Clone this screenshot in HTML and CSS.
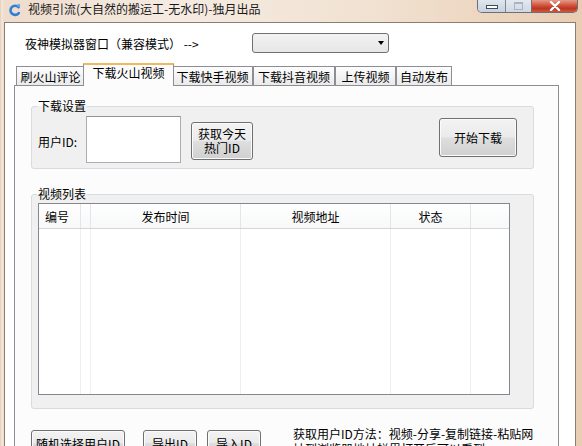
FILE: index.html
```html
<!DOCTYPE html>
<html lang="zh">
<head>
<meta charset="utf-8">
<title>视频引流</title>
<link rel="stylesheet" href="styles.css">
</head>
<body>
<div class="window">
  <div class="titlebar">
    <svg class="app-icon" viewBox="0 0 14 14" width="14" height="14">
      <path d="M10.5 4.2 A4.6 4.6 0 1 0 10.8 10" fill="none" stroke="#2f7fd6" stroke-width="2.6" stroke-linecap="round"/>
      <circle cx="10.6" cy="2.2" r="1.5" fill="#5fa8ee"/>
    </svg>
    <span class="title">视频引流(大自然的搬运工-无水印)-独月出品</span>
    <div class="controls">
      <div class="ctl ctl-min"><span class="min-glyph"></span></div>
      <div class="ctl ctl-max"><span class="max-glyph"></span></div>
      <div class="ctl ctl-close">
        <svg viewBox="0 0 12 10" width="12" height="10"><path d="M2 1 L10 9 M10 1 L2 9" stroke="#fff" stroke-width="2.4" stroke-linecap="round"/></svg>
      </div>
    </div>
  </div>
  <div class="client">
    <div class="toprow">
      <span class="toplabel">夜神模拟器窗口（兼容模式） --></span>
      <div class="combo"><span class="combo-arrow"></span></div>
    </div>
    <div class="tabstrip">
      <div class="tab w1">刷火山评论</div>
      <div class="tab tab-active">下载火山视频</div>
      <div class="tab w3">下载快手视频</div>
      <div class="tab w4">下载抖音视频</div>
      <div class="tab w5">上传视频</div>
      <div class="tab w6">自动发布</div>
    </div>
    <div class="panel">
      <fieldset class="group group-settings">
        <legend>下载设置</legend>
        <div class="settings-row">
          <span class="uid-label">用户ID:</span>
          <div class="textbox"></div>
          <div class="btn btn-hot"><span class="btn-line">获取今天</span><span class="btn-line">热门ID</span></div>
          <div class="btn btn-start">开始下载</div>
        </div>
      </fieldset>
      <fieldset class="group group-list">
        <legend>视频列表</legend>
        <div class="listview">
          <div class="lv-head">
            <div class="lv-h c1 left">编号</div>
            <div class="lv-h c2"></div>
            <div class="lv-h c3">发布时间</div>
            <div class="lv-h c4">视频地址</div>
            <div class="lv-h c5">状态</div>
            <div class="lv-h c6"></div>
          </div>
          <div class="lv-body">
            <div class="lv-col c1"></div>
            <div class="lv-col c2"></div>
            <div class="lv-col c3"></div>
            <div class="lv-col c4"></div>
            <div class="lv-col c5"></div>
            <div class="lv-col c6"></div>
          </div>
        </div>
      </fieldset>
      <div class="bottomrow">
        <div class="btn btn-random">随机选择用户ID</div>
        <div class="btn btn-small btn-export">导出ID</div>
        <div class="btn btn-small btn-import">导入ID</div>
        <div class="howto">获取用户ID方法：视频-分享-复制链接-粘贴网址到浏览器地址栏里打开后可以看到</div>
      </div>
    </div>
  </div>
</div>
</body>
</html>
```
FILE: styles.css
```css
* { box-sizing: border-box; }
body {
  margin: 0;
  width: 582px;
  height: 446px;
  overflow: hidden;
  font-family: "Noto Sans CJK SC", "Liberation Sans", sans-serif;
  font-size: 12px;
  color: #000;
}
.window {
  width: 582px;
  height: 446px;
  overflow: hidden;
  display: flex;
  flex-direction: column;
  background: linear-gradient(90deg, #e8cdb6 0px, #f4e8de 2px, #eedccd 4px, #f5ebe2 30%, #f1e1d1 65%, #e9cdb2 100%);
}
.titlebar {
  height: 22px;
  flex-shrink: 0;
  display: flex;
  align-items: flex-start;
}
.app-icon { margin: 3px 0 0 8px; flex-shrink: 0; }
.title {
  margin-left: 6px;
  line-height: 17px;
  font-size: 12px;
  color: #1a1a1a;
}
.controls {
  margin-left: auto;
  margin-right: 4px;
  display: flex;
  height: 13px;
  border: 1px solid #6a6f7a;
  border-top: none;
  border-radius: 0 0 5px 5px;
  overflow: hidden;
}
.ctl {
  height: 12px;
  display: flex;
  align-items: center;
  justify-content: center;
}
.ctl-min {
  width: 28px;
  background: linear-gradient(#dfe6ee, #c6d2e0);
  border-right: 1px solid #7d8796;
}
.ctl-max {
  width: 26px;
  background: linear-gradient(#e4e9ef, #cfd8e3);
  border-right: 1px solid #7d6a66;
}
.ctl-close {
  width: 45px;
  background: linear-gradient(#e59a8a 0%, #d0533d 45%, #bd3520 70%, #cd5a40 100%);
}
.min-glyph {
  width: 12px;
  height: 4px;
  margin-top: 2px;
  background: #fff;
  border: 1px solid #3f4a5a;
}
.max-glyph {
  width: 9px;
  height: 8px;
  border: 1px solid #aab3bf;
  border-top-width: 2px;
}
.client {
  margin-left: 4px;
  width: 572px;
  flex: 1;
  background: #fff;
  border: 1px solid #8d7d70;
  border-bottom: none;
}
.toprow {
  height: 40px;
  display: flex;
  align-items: center;
  padding-left: 20px;
}
.toplabel { width: 227px; white-space: pre; }
.combo {
  width: 137px;
  height: 20px;
  margin-top: -1px;
  border: 1px solid #707070;
  border-radius: 3px;
  background: linear-gradient(#f3f3f3, #e6e6e6);
  display: flex;
  align-items: center;
  justify-content: flex-end;
  padding-right: 4px;
}
.combo-arrow {
  width: 0;
  height: 0;
  border-left: 3.5px solid transparent;
  border-right: 3.5px solid transparent;
  border-top: 4px solid #000;
}
.tabstrip {
  height: 22px;
  display: flex;
  align-items: flex-end;
  padding-left: 11px;
}
.tab {
  height: 19px;
  border: 1px solid #8c8e94;
  border-bottom: none;
  background: linear-gradient(#fdfdfd, #eaeaea);
  display: flex;
  align-items: center;
  justify-content: center;
  line-height: 14px;
  padding-top: 1px;
  white-space: nowrap;
}
.w1 { width: 69px; }
.w3 { width: 81px; }
.w4 { width: 82px; }
.w5 { width: 61px; }
.w6 { width: 56px; }
.tab-active {
  width: 91px;
  height: 23px;
  margin: 0 -2px -1px;
  position: relative;
  z-index: 1;
  background: #fcfcfd;
  border-top: 2px solid #f0b95e;
  align-items: flex-start;
  padding-top: 1px;
}
.panel {
  margin-left: 9px;
  width: 545px;
  height: 400px;
  border: 1px solid #8c8e94;
  background: #fcfcfc;
}
.group {
  margin: 0 0 0 16px;
  padding: 0;
  width: 503px;
  min-inline-size: 0;
  border: 1px solid #d5dde2;
  border-radius: 3px;
  background: #f0f0f0;
}
.group legend {
  padding: 0 1px;
  margin-left: 5px;
  line-height: 12px;
  font-size: 12px;
}
.group-settings { margin-top: 14px; }
.settings-row {
  margin-top: 4px;
  margin-bottom: 5px;
  height: 47px;
  display: flex;
  align-items: flex-start;
}
.uid-label {
  width: 48px;
  margin-left: 6px;
  align-self: center;
  padding-top: 4px;
}
.textbox {
  width: 95px;
  height: 47px;
  background: #fff;
  border: 1px solid #abadb3;
  border-top-color: #8f939b;
}
.btn {
  border: 1px solid #707070;
  border-radius: 3px;
  background: linear-gradient(#f3f3f3 0%, #ebebeb 48%, #dedede 52%, #d0d0d0 100%);
  box-shadow: inset 0 0 0 1px #fbfbfb;
  display: flex;
  align-items: center;
  justify-content: center;
  text-align: center;
  white-space: nowrap;
}
.btn-hot {
  width: 62px;
  height: 38px;
  margin: 6px 0 0 10px;
  flex-direction: column;
}
.btn-line {
  display: block;
  height: 14px;
  line-height: 14px;
  overflow: visible;
}
.btn-start {
  width: 78px;
  height: 39px;
  margin: 2px 16px 0 auto;
}
.group-list { margin-top: 19px; }
.listview {
  margin: 3px 0 13px 6px;
  width: 472px;
  height: 192px;
  border: 1px solid #828790;
  background: #fff;
  display: flex;
  flex-direction: column;
}
.lv-head {
  height: 25px;
  display: flex;
  border-bottom: 1px solid #d5d5d5;
  background: linear-gradient(#ffffff, #f7f8f9);
}
.lv-h {
  border-right: 1px solid #e3e5e8;
  display: flex;
  align-items: center;
  justify-content: center;
  padding-top: 1px;
}
.lv-h.left { justify-content: flex-start; padding-left: 6px; }
.lv-body { flex: 1; display: flex; }
.lv-col { border-right: 1px solid #efefef; }
.c1 { width: 42px; }
.c2 { width: 10px; }
.c3 { width: 150px; }
.c4 { width: 150px; }
.c5 { width: 80px; }
.c6 { flex: 1; border-right: none; }
.bottomrow {
  margin-top: 21px;
  display: flex;
  align-items: flex-start;
  padding-left: 16px;
}
.btn-random { width: 94px; height: 26px; }
.btn-small { width: 54px; height: 26px; }
.btn-export { margin-left: 18px; }
.btn-import { margin-left: 10px; }
.howto {
  margin: -4px 0 0 32px;
  width: 252px;
  line-height: 15px;
}
```
